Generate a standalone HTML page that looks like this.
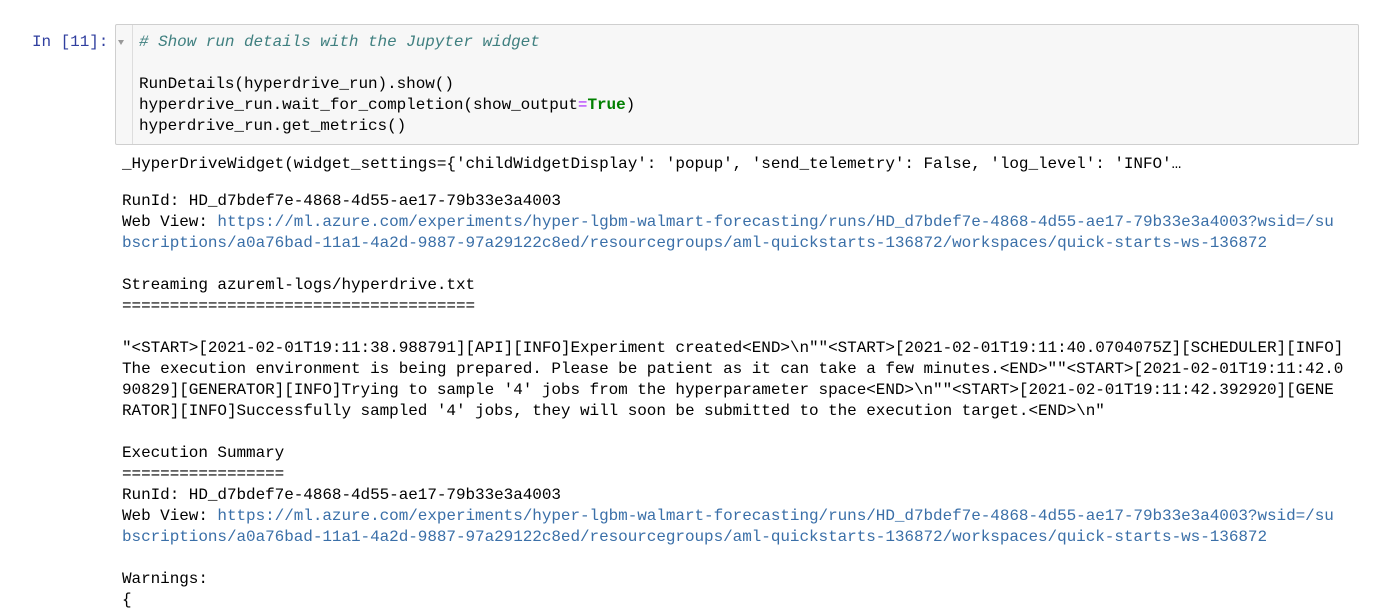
<!DOCTYPE html>
<html><head><meta charset="utf-8"><style>
body{margin:0;width:1375px;height:610px;background:#fff;overflow:hidden;position:relative;font-family:"Liberation Mono",monospace;font-size:16px;letter-spacing:-0.06px;color:#000}
.l{position:absolute;left:122px;white-space:pre;line-height:21px;height:21px}
.c{left:139px}
a{color:#3a6fa8;text-decoration:none}
.cell{position:absolute;left:115px;top:24px;width:1242px;height:119px;background:#f7f7f7;border:1px solid #cfcfcf;border-radius:2px}
.gut{position:absolute;left:132px;top:25px;width:1px;height:119px;background:#ddd}
.pr{position:absolute;left:32px;top:32px;color:#303f9f;white-space:pre;line-height:21px}
.cm{color:#408080;font-style:italic}
.kw{color:#008000;font-weight:bold}
.op{color:#aa22ff}
.tri{position:absolute;left:118px;top:40px;width:0;height:0;border-left:3px solid transparent;border-right:3px solid transparent;border-top:5px solid #999}
</style></head><body>
<div class="pr">In [11]:</div>
<div class="cell"></div><div class="gut"></div><div class="tri"></div>
<div class="l c" style="top:32px"><span class="cm"># Show run details with the Jupyter widget</span></div>
<div class="l c" style="top:74px">RunDetails(hyperdrive_run).show()</div>
<div class="l c" style="top:95px">hyperdrive_run.wait_for_completion(show_output<span class="op">=</span><span class="kw">True</span>)</div>
<div class="l c" style="top:116px">hyperdrive_run.get_metrics()</div>
<div class="l" style="top:154px">_HyperDriveWidget(widget_settings={'childWidgetDisplay': 'popup', 'send_telemetry': False, 'log_level': 'INFO'…</div>
<div class="l" style="top:191px">RunId: HD_d7bdef7e-4868-4d55-ae17-79b33e3a4003</div>
<div class="l" style="top:212px">Web View: <a>https://ml.azure.com/experiments/hyper-lgbm-walmart-forecasting/runs/HD_d7bdef7e-4868-4d55-ae17-79b33e3a4003?wsid=/su</a></div>
<div class="l" style="top:233px"><a>bscriptions/a0a76bad-11a1-4a2d-9887-97a29122c8ed/resourcegroups/aml-quickstarts-136872/workspaces/quick-starts-ws-136872</a></div>
<div class="l" style="top:275px">Streaming azureml-logs/hyperdrive.txt</div>
<div class="l" style="top:296px">=====================================</div>
<div class="l" style="top:338px">"&lt;START&gt;[2021-02-01T19:11:38.988791][API][INFO]Experiment created&lt;END&gt;\n""&lt;START&gt;[2021-02-01T19:11:40.0704075Z][SCHEDULER][INFO]</div>
<div class="l" style="top:359px">The execution environment is being prepared. Please be patient as it can take a few minutes.&lt;END&gt;""&lt;START&gt;[2021-02-01T19:11:42.0</div>
<div class="l" style="top:380px">90829][GENERATOR][INFO]Trying to sample '4' jobs from the hyperparameter space&lt;END&gt;\n""&lt;START&gt;[2021-02-01T19:11:42.392920][GENE</div>
<div class="l" style="top:401px">RATOR][INFO]Successfully sampled '4' jobs, they will soon be submitted to the execution target.&lt;END&gt;\n"</div>
<div class="l" style="top:443px">Execution Summary</div>
<div class="l" style="top:464px">=================</div>
<div class="l" style="top:485px">RunId: HD_d7bdef7e-4868-4d55-ae17-79b33e3a4003</div>
<div class="l" style="top:506px">Web View: <a>https://ml.azure.com/experiments/hyper-lgbm-walmart-forecasting/runs/HD_d7bdef7e-4868-4d55-ae17-79b33e3a4003?wsid=/su</a></div>
<div class="l" style="top:527px"><a>bscriptions/a0a76bad-11a1-4a2d-9887-97a29122c8ed/resourcegroups/aml-quickstarts-136872/workspaces/quick-starts-ws-136872</a></div>
<div class="l" style="top:569px">Warnings:</div>
<div class="l" style="top:590px">{</div>
</body></html>
